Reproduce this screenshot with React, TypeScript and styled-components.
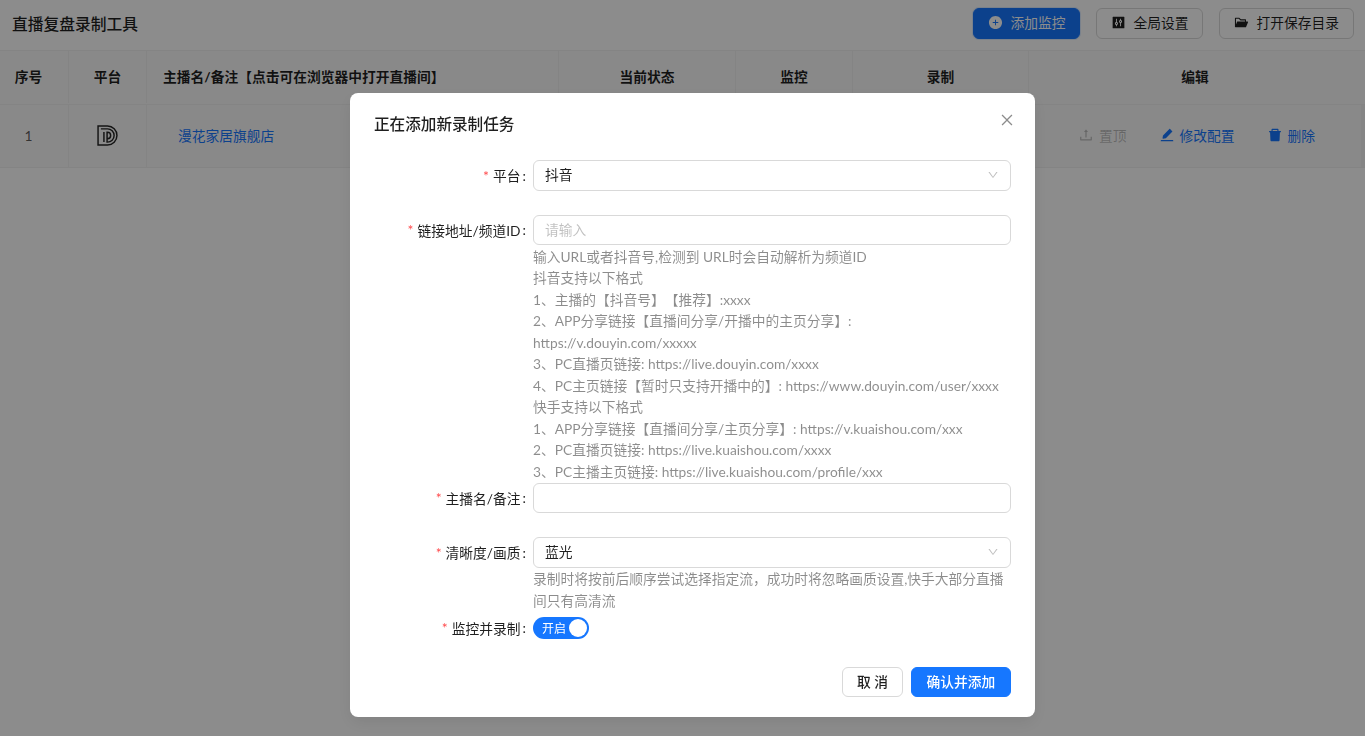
import React from 'react';
import styled, { createGlobalStyle } from 'styled-components';
import {
  AiFillPlusCircle,
  AiFillControl,
  AiFillFolderOpen,
  AiOutlineUpload,
  AiFillEdit,
  AiFillDelete,
  AiOutlineClose,
  AiOutlineDown,
} from 'react-icons/ai';

const GlobalStyle = createGlobalStyle`
  * {
    box-sizing: border-box;
  }
  html, body {
    margin: 0;
    height: 100%;
    overflow: hidden;
    background: #fff;
    font-family: "Lato", "Noto Sans CJK SC", sans-serif;
    font-size: 13.75px;
    text-spacing-trim: space-all;
    color: rgba(0, 0, 0, 0.88);
  }
`;

const COLUMNS = '69px 78px 412px 177px 117px 176px 1fr';

const helpLines = [
  '输入URL或者抖音号,检测到 URL时会自动解析为频道ID',
  '抖音支持以下格式',
  '1、主播的【抖音号】【推荐】:xxxx',
  '2、APP分享链接【直播间分享/开播中的主页分享】:',
  'https://v.douyin.com/xxxxx',
  '3、PC直播页链接: https://live.douyin.com/xxxx',
  '4、PC主页链接【暂时只支持开播中的】: https://www.douyin.com/user/xxxx',
  '快手支持以下格式',
  '1、APP分享链接【直播间分享/主页分享】: https://v.kuaishou.com/xxx',
  '2、PC直播页链接: https://live.kuaishou.com/xxxx',
  '3、PC主播主页链接: https://live.kuaishou.com/profile/xxx',
];

function App() {
  return (
    <>
      <GlobalStyle />
      <Page>
        <TopBar>
          <Title>直播复盘录制工具</Title>
          <TopActions>
            <PrimaryButton>
              <AiFillPlusCircle size={15} />
              添加监控
            </PrimaryButton>
            <OutlineButton>
              <AiFillControl size={15} />
              全局设置
            </OutlineButton>
            <OutlineButton>
              <AiFillFolderOpen size={15} />
              打开保存目录
            </OutlineButton>
          </TopActions>
        </TopBar>
        <HeadRow>
          <IndexHead>序号</IndexHead>
          <HeadCell>平台</HeadCell>
          <NameHead>主播名/备注【点击可在浏览器中打开直播间】</NameHead>
          <HeadCell>当前状态</HeadCell>
          <HeadCell>监控</HeadCell>
          <HeadCell>录制</HeadCell>
          <EditHead>编辑</EditHead>
        </HeadRow>
        <BodyRow>
          <IndexCell>1</IndexCell>
          <BodyCell>
            <PlatformLogo viewBox="0 0 20 20" fill="none" stroke="#262626" strokeWidth="1.4">
              <path d="M1 1h9a9 9 0 0 1 0 18H1z" />
              <path d="M3.7 3.7H10a6.3 6.3 0 0 1 0 12.6H9.6V7H10a3 3 0 0 1 0 6" />
              <path d="M6.6 16.3V6.6" />
            </PlatformLogo>
          </BodyCell>
          <NameCell>
            <NameLink>漫花家居旗舰店</NameLink>
          </NameCell>
          <BodyCell />
          <BodyCell />
          <BodyCell />
          <EditCell>
            <RowAction $disabled>
              <AiOutlineUpload size={16} />
              置顶
            </RowAction>
            <RowAction>
              <AiFillEdit size={16} />
              修改配置
            </RowAction>
            <RowAction>
              <AiFillDelete size={16} />
              删除
            </RowAction>
          </EditCell>
        </BodyRow>
      </Page>
      <Mask>
        <Modal>
          <ModalHead>
            <ModalTitle>正在添加新录制任务</ModalTitle>
          </ModalHead>
          <CloseButton>
            <AiOutlineClose size={16} />
          </CloseButton>
          <FormItem $mb={24}>
            <Label>平台</Label>
            <Control>
              <Field>
                抖音
                <AiOutlineDown size={12} color="#bfbfbf" />
              </Field>
            </Control>
          </FormItem>
          <FormItem $mb={0}>
            <Label>链接地址/频道ID</Label>
            <Control>
              <Field $placeholder>请输入</Field>
              <Help>
                {helpLines.map((line) => (
                  <div key={line}>{line}</div>
                ))}
              </Help>
            </Control>
          </FormItem>
          <FormItem $mb={24}>
            <Label>主播名/备注</Label>
            <Control>
              <Field />
            </Control>
          </FormItem>
          <FormItem $mb={5}>
            <Label>清晰度/画质</Label>
            <Control>
              <Field>
                蓝光
                <AiOutlineDown size={12} color="#bfbfbf" />
              </Field>
              <Help>
                录制时将按前后顺序尝试选择指定流，成功时将忽略画质设置,快手大部分直播间只有高清流
              </Help>
            </Control>
          </FormItem>
          <FormItem $mb={0}>
            <Label $short>监控并录制</Label>
            <Control>
              <Switch>
                开启
                <Knob />
              </Switch>
            </Control>
          </FormItem>
          <ModalFoot>
            <CancelButton>取 消</CancelButton>
            <ConfirmButton>确认并添加</ConfirmButton>
          </ModalFoot>
        </Modal>
      </Mask>
    </>
  );
}

const Page = styled.div`
  height: 100vh;
  background: #fff;
`;

const TopBar = styled.header`
  display: flex;
  align-items: center;
  justify-content: space-between;
  height: 51px;
  padding: 0 11px 4px 12px;
  border-bottom: 1px solid #f0f0f0;
`;

const Title = styled.h1`
  margin: 0;
  font-size: 15.75px;
  font-weight: 500;
  color: #1f1f1f;
`;

const TopActions = styled.div`
  display: flex;
  gap: 16px;
`;

const OutlineButton = styled.button`
  display: flex;
  align-items: center;
  gap: 7px;
  height: 31px;
  padding: 0 14px 2px;
  border: 1px solid #d9d9d9;
  border-radius: 6px;
  background: #fff;
  color: rgba(0, 0, 0, 0.88);
  font: inherit;
`;

const PrimaryButton = styled(OutlineButton)`
  border-color: #1677ff;
  background: #1677ff;
  color: #fff;
  box-shadow: 0 0 0 1px rgba(22, 119, 255, 0.15);
`;

const HeadRow = styled.div`
  display: grid;
  grid-template-columns: ${COLUMNS};
  height: 54px;
  padding-bottom: 1px;
  background: #fafafa;
  border-bottom: 1px solid #f0f0f0;
`;

const HeadCell = styled.div`
  display: flex;
  align-items: center;
  justify-content: center;
  padding-bottom: 2px;
  border-right: 1px solid #f0f0f0;
  font-weight: 700;
  color: rgba(0, 0, 0, 0.88);
`;

const IndexHead = styled(HeadCell)`
  padding-right: 11px;
`;

const NameHead = styled(HeadCell)`
  justify-content: flex-start;
  padding-left: 16px;
`;

const EditHead = styled(HeadCell)`
  padding-right: 4px;
  border-right: 0;
`;

const BodyRow = styled.div`
  display: grid;
  grid-template-columns: ${COLUMNS};
  height: 63px;
  background: #f2f2f2;
  border-bottom: 1px solid #f0f0f0;
`;

const BodyCell = styled.div`
  display: flex;
  align-items: center;
  justify-content: center;
  padding-bottom: 2px;
  border-right: 1px solid #f0f0f0;
  background: #fafafa;
`;

const IndexCell = styled(BodyCell)`
  padding-right: 11px;
  color: rgba(0, 0, 0, 0.65);
`;

const NameCell = styled(BodyCell)`
  justify-content: flex-start;
  padding-left: 31px;
`;

const NameLink = styled.a`
  color: #1677ff;
`;

const EditCell = styled(BodyCell)`
  justify-content: flex-start;
  gap: 32px;
  padding-left: 49px;
  margin-right: 4px;
  border-right: 0;
`;

const RowAction = styled.span<{ $disabled?: boolean }>`
  display: flex;
  align-items: center;
  gap: 5px;
  color: ${(p) => (p.$disabled ? 'rgba(0, 0, 0, 0.25)' : '#1677ff')};
`;

const PlatformLogo = styled.svg`
  width: 21px;
  height: 21px;
`;

const Mask = styled.div`
  position: fixed;
  inset: 0;
  background: rgba(0, 0, 0, 0.45);
`;

const Modal = styled.div`
  position: absolute;
  top: 93px;
  left: 350px;
  width: 685px;
  height: 624px;
  padding: 19px 24px;
  border-radius: 8px;
  background: #fff;
  box-shadow: 0 6px 16px rgba(0, 0, 0, 0.08);
`;

const ModalHead = styled.div`
  display: flex;
  align-items: center;
  height: 22px;
  margin-bottom: 26px;
`;

const ModalTitle = styled.h2`
  margin: 0;
  font-size: 15.6px;
  font-weight: 500;
  color: rgba(0, 0, 0, 0.88);
`;

const CloseButton = styled.span`
  position: absolute;
  top: 19px;
  right: 20px;
  display: flex;
  color: rgba(0, 0, 0, 0.45);
`;

const FormItem = styled.div<{ $mb: number }>`
  display: grid;
  grid-template-columns: 159px 478px;
  margin-bottom: ${(p) => p.$mb}px;
`;

const Label = styled.label<{ $short?: boolean }>`
  display: flex;
  align-items: center;
  justify-content: flex-end;
  height: ${(p) => (p.$short ? 22 : 30.5)}px;
  padding-right: 7px;
  &::before {
    content: '*';
    margin-right: 4px;
    font-size: 14px;
    color: #ff4d4f;
  }
  &::after {
    content: ':';
    margin-left: 2px;
  }
`;

const Control = styled.div`
  min-width: 0;
`;

const Field = styled.div<{ $placeholder?: boolean }>`
  display: flex;
  align-items: center;
  justify-content: space-between;
  height: 30.5px;
  padding: 0 11px 2px;
  border: 1px solid #d9d9d9;
  border-radius: 6px;
  background: #fff;
  color: ${(p) => (p.$placeholder ? 'rgba(0, 0, 0, 0.25)' : 'rgba(0, 0, 0, 0.88)')};
  svg {
    margin-top: 2px;
  }
`;

const Help = styled.div`
  padding: 0.5px 0;
  line-height: 21.5px;
  color: rgba(0, 0, 0, 0.45);
`;

const Switch = styled.div`
  display: flex;
  align-items: center;
  width: 56px;
  height: 22px;
  padding-left: 9px;
  border-radius: 11px;
  background: #1677ff;
  color: #fff;
  font-size: 12px;
  position: relative;
`;

const Knob = styled.span`
  position: absolute;
  top: 2px;
  right: 2px;
  width: 18px;
  height: 18px;
  border-radius: 50%;
  background: #fff;
`;

const ModalFoot = styled.div`
  display: flex;
  justify-content: flex-end;
  gap: 8px;
  margin-top: 28px;
`;

const CancelButton = styled.button`
  height: 30.5px;
  padding: 0 14px 2px;
  border: 1px solid #d9d9d9;
  border-radius: 6px;
  background: #fff;
  color: rgba(0, 0, 0, 0.88);
  font: inherit;
  font-weight: 500;
`;

const ConfirmButton = styled(CancelButton)`
  width: 100px;
  padding: 0 0 2px;
  border-color: #1677ff;
  background: #1677ff;
  color: #fff;
`;

export default App;
